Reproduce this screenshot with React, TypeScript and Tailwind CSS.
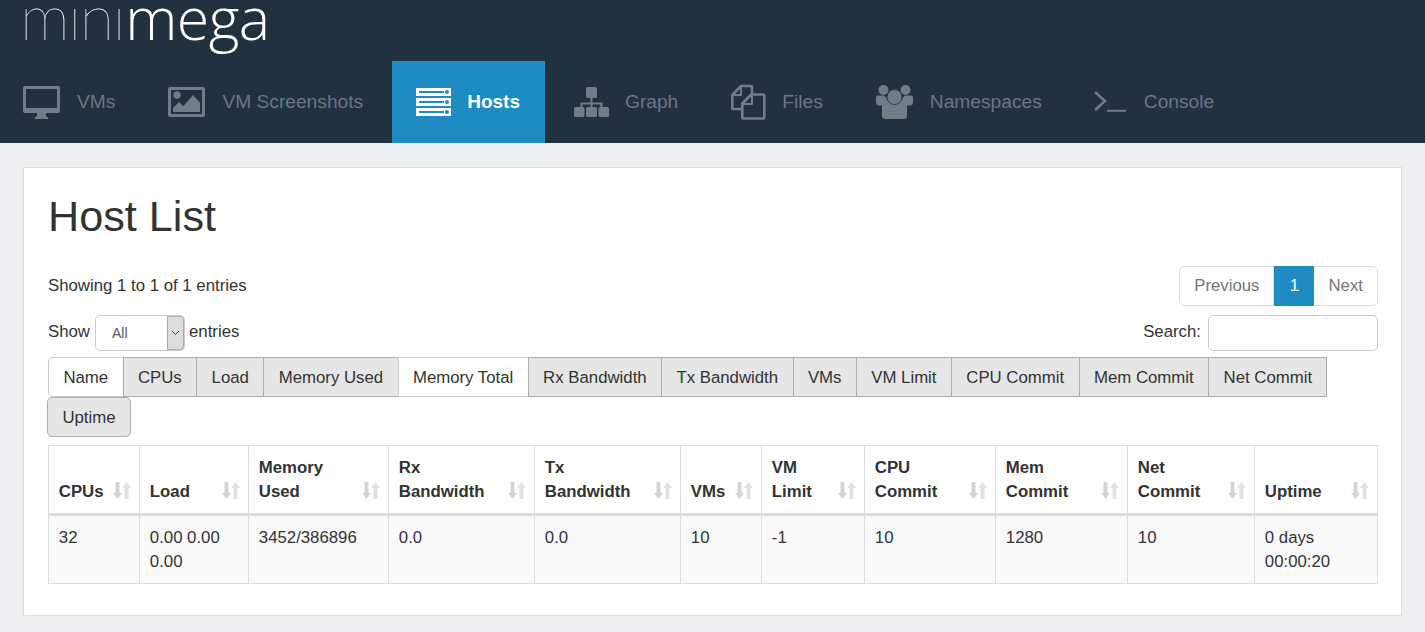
import React from 'react';

const tabs = ['Name', 'CPUs', 'Load', 'Memory Used', 'Memory Total', 'Rx Bandwidth', 'Tx Bandwidth', 'VMs', 'VM Limit', 'CPU Commit', 'Mem Commit', 'Net Commit'];

const columns = [
  { label: ['CPUs'], value: '32', width: 'w-[91px]' },
  { label: ['Load'], value: '0.00 0.00 0.00', width: 'w-[109px]' },
  { label: ['Memory', 'Used'], value: '3452/386896', width: 'w-[140px]' },
  { label: ['Rx', 'Bandwidth'], value: '0.0', width: 'w-[146px]' },
  { label: ['Tx', 'Bandwidth'], value: '0.0', width: 'w-[146px]' },
  { label: ['VMs'], value: '10', width: 'w-[81px]' },
  { label: ['VM', 'Limit'], value: '-1', width: 'w-[103px]' },
  { label: ['CPU', 'Commit'], value: '10', width: 'w-[131px]' },
  { label: ['Mem', 'Commit'], value: '1280', width: 'w-[132px]' },
  { label: ['Net', 'Commit'], value: '10', width: 'w-[127px]' },
  { label: ['Uptime'], value: '0 days 00:00:20', width: 'w-[123px]' },
];

const DesktopIcon = () => (
  <svg width="37" height="33" viewBox="0 0 37 33" fill="currentColor">
    <path fillRule="evenodd" d="M2 0h33a2 2 0 0 1 2 2v23a2 2 0 0 1-2 2H2a2 2 0 0 1-2-2V2a2 2 0 0 1 2-2zM3 3v19h31V3z" />
    <path d="M14 27h9v3l2 1.500v1.500H12v-1.500l2-1.500z" />
  </svg>
);

const ImageIcon = () => (
  <svg width="37" height="30" viewBox="0 0 37 30" fill="currentColor">
    <path fillRule="evenodd" d="M2 0h33a2 2 0 0 1 2 2v26a2 2 0 0 1-2 2H2a2 2 0 0 1-2-2V2a2 2 0 0 1 2-2zM3 3v24h31V3z" />
    <circle cx="9" cy="8" r="3.700" />
    <path d="M5 25v-4l6-6 4.500 4L25 8l7 7.500V25z" />
  </svg>
);

const ServerIcon = () => (
  <svg width="35" height="28" viewBox="0 0 35 28">
    {[0, 10, 20].map((y) => (
      <g key={y}>
        <rect x="0" y={y} width="35" height="8" fill="#fff" />
        <rect x="3" y={y + 3} width="25" height="2" fill="#1e8bc3" />
        <circle cx="31" cy={y + 4} r="2" fill="#1e8bc3" />
      </g>
    ))}
  </svg>
);

const SitemapIcon = () => (
  <svg width="35" height="30" viewBox="0 0 35 30" fill="currentColor">
    <rect x="12" y="0" width="11" height="11" rx="1.500" />
    <rect x="0" y="20" width="10.500" height="10" rx="1.500" />
    <rect x="12" y="20" width="11" height="10" rx="1.500" />
    <rect x="24.500" y="20" width="10.500" height="10" rx="1.500" />
    <path d="M16.500 11h2v4.500h10v4.500h-2v-2.500h-8V20h-2v-2.500h-8V20h-2v-4.500h10z" />
  </svg>
);

const FilesIcon = () => (
  <svg width="35" height="36" viewBox="0 0 35 36" fill="none" stroke="currentColor" strokeWidth="2.600" strokeLinejoin="round">
    <path d="M11 25H2.300a1 1 0 0 1-1-1V11L10 2h10a1 1 0 0 1 1 1v7" />
    <path d="M10 2v9H1.300" strokeWidth="2" />
    <path d="M12.300 34.500a1 1 0 0 1-1-1V19.500l9-9H32a1 1 0 0 1 1.300 1v22a1 1 0 0 1-1 1z" />
    <path d="M21 10.500V20h-9.700" strokeWidth="2" />
  </svg>
);

const UsersIcon = () => (
  <svg width="37" height="34" viewBox="0 0 37 34" fill="currentColor">
    <circle cx="7.500" cy="5" r="5" />
    <circle cx="29.500" cy="5" r="5" />
    <path d="M2 10.500h6l3 3-3 7H3a3 3 0 0 1-3-3v-5a2 2 0 0 1 2-2z" />
    <path d="M35 10.500h-6l-3 3 3 7h5a3 3 0 0 0 3-3v-5a2 2 0 0 0-2-2z" />
    <path d="M11 15h15a5 5 0 0 1 5 5v11a3 3 0 0 1-3 3H9a3 3 0 0 1-3-3V20a5 5 0 0 1 5-5z" />
    <circle cx="18.500" cy="12" r="7.500" stroke="#223140" strokeWidth="0.800" />
  </svg>
);

const TerminalIcon = () => (
  <svg width="32" height="22" viewBox="0 0 32 22" fill="none" stroke="currentColor" strokeWidth="2.500">
    <path d="M1 1l10 9-10 9" />
    <path d="M13 19.800h19" strokeWidth="2" />
  </svg>
);

const SortIcon = () => (
  <svg width="18" height="17" viewBox="0 0 18 17" className="absolute bottom-[14px] right-[8px]">
    <path d="M2.500 0h4v11h2.500L4.500 17 0 11h2.500z" fill="#d4d4d4" />
    <path d="M11.500 17h4V6H18l-4.500-6L9 6h2.500z" fill="#e2e2e2" />
  </svg>
);

const NavItem = ({ label, icon, active, iconBox, spacing }: { label: string; icon: React.ReactNode; active?: boolean; iconBox: string; spacing?: string }) => (
  <a
    className={
      active
        ? 'flex h-[82px] items-center pl-[24px] pr-[25px] pb-[1px] text-[19px] font-bold text-white bg-[#1e8bc3]'
        : `flex h-[82px] items-center px-[24px] pb-[1px] text-[19.2px] text-[#697683] ${spacing ?? ''}`
    }
  >
    <span className={`flex shrink-0 items-center pt-[1px] ${iconBox} ${active ? 'text-white' : 'text-[#727c86]'}`}>{icon}</span>
    {label}
  </a>
);

export default function App() {
  return (
    <div className="min-h-[632px] overflow-hidden bg-[#ecf0f1] font-['Liberation_Sans',Arial,sans-serif] text-[16.8px] leading-[24px] text-[#333]">
      <header className="h-[143px] bg-[#223140] overflow-hidden">
        <div className="h-[61px] overflow-hidden pl-[20px]">
          <div className="mt-[-24px] flex items-baseline leading-[80px] text-white whitespace-nowrap">
            <span className="font-['Lato',sans-serif] text-[63px] font-thin tracking-[-1.5px]">mini</span>
            <span className="ml-[1px] font-['Open_Sans',sans-serif] text-[59px] font-light tracking-[-0.5px]">mega</span>
          </div>
        </div>
        <nav className="ml-[-1px] flex gap-[5px]">
          <NavItem label="VMs" icon={<DesktopIcon />} iconBox="w-[54px]" />
          <NavItem label="VM Screenshots" icon={<ImageIcon />} iconBox="w-[54px]" />
          <NavItem label="Hosts" icon={<ServerIcon />} iconBox="w-[51px]" active />
          <NavItem label="Graph" icon={<SitemapIcon />} iconBox="w-[51px]" />
          <NavItem label="Files" icon={<FilesIcon />} iconBox="w-[51px]" />
          <NavItem label="Namespaces" icon={<UsersIcon />} iconBox="w-[54px]" spacing="pr-[23px]" />
          <NavItem label="Console" icon={<TerminalIcon />} iconBox="w-[50px]" />
        </nav>
      </header>

      <main className="ml-[23px] mr-[23px] mt-[24px] h-[449px] border border-[#dddddd] bg-white pl-[24px] pr-[23px]">
        <h1 className="mt-[24px] text-[43.2px] leading-[48px] text-[#333]">Host List</h1>

        <div className="mt-[26px] flex items-center justify-between">
          <div>Showing 1 to 1 of 1 entries</div>
          <div className="flex h-[40px] text-[#777] leading-[38px]">
            <span className="rounded-l-[5px] border border-[#ddd] bg-white px-[14px]">Previous</span>
            <span className="w-[40px] bg-[#1e8bc3] text-center leading-[40px] text-white">1</span>
            <span className="rounded-r-[5px] border border-[#ddd] border-l-0 bg-white px-[14px]">Next</span>
          </div>
        </div>

        <div className="mt-[9px] flex items-center justify-between">
          <div className="flex items-center">
            <span className="pb-[2px]">Show</span>
            <div className="ml-[5px] mr-[4px] flex h-[36px] w-[90px] rounded-[5px] border border-[#ccc] pl-[16px] text-[14px] leading-[34px] text-[#555]">
              <span className="flex-1">All</span>
              <span className="flex w-[17px] items-center justify-center rounded-r-[4px] border border-[#aaa] bg-[#ddd]">
                <svg width="9" height="6" viewBox="0 0 9 6" fill="none" stroke="#444" strokeWidth="1">
                  <path d="M1 1l3.500 3.500L8 1" />
                </svg>
              </span>
            </div>
            <span className="pb-[2px]">entries</span>
          </div>
          <div className="flex items-center">
            <span className="pb-[2px]">Search:</span>
            <input className="ml-[7px] h-[36px] w-[170px] rounded-[5px] border border-[#ccc] bg-white" />
          </div>
        </div>

        <div className="mt-[6px] flex flex-wrap">
          {tabs.map((t, i) => {
            const on = t === 'Name' || t === 'Memory Total';
            return (
              <button
                key={t}
                className={`h-[40px] border px-[14.4px] pt-[1px] ${i > 0 ? 'ml-[-1px]' : 'rounded-l-[5px]'} ${on ? 'border-[#ccc] bg-white' : 'border-[#adadad] bg-[#e6e6e6]'}`}
              >
                {t}
              </button>
            );
          })}
          <button className="ml-[-1px] h-[40px] rounded-[5px] border border-[#adadad] bg-[#e6e6e6] px-[14.4px] pt-[1px]">Uptime</button>
        </div>

        <table className="mt-[8px] w-[1330px] table-fixed border-collapse border border-[#ddd]">
          <thead>
            <tr>
              {columns.map((c) => (
                <th key={c.value + c.width} className={`relative h-[69px] border border-b-[3px] border-[#ddd] px-[9.8px] pb-[9px] text-left align-bottom font-bold ${c.width}`}>
                  {c.label.map((l) => (
                    <div key={l}>{l}</div>
                  ))}
                  <SortIcon />
                </th>
              ))}
            </tr>
          </thead>
          <tbody>
            <tr className="bg-[#f9f9f9]">
              {columns.map((c) => (
                <td key={c.value + c.width} className="h-[66px] border border-[#ddd] px-[9.8px] pt-[10px] pb-[9px] align-top">
                  {c.value}
                </td>
              ))}
            </tr>
          </tbody>
        </table>
      </main>
    </div>
  );
}
